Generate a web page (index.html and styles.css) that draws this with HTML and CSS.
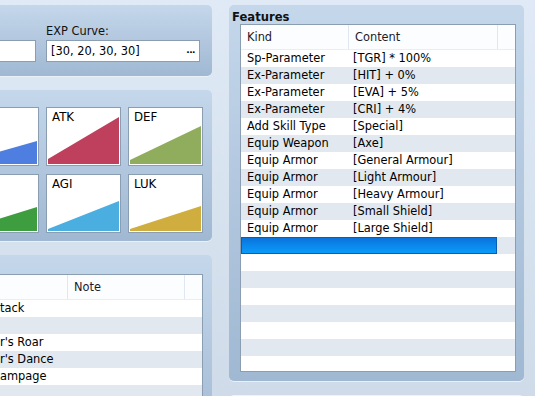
FILE: index.html
```html
<!DOCTYPE html>
<html lang="en">
<head>
  <meta charset="UTF-8">
  <title>Database - Classes</title>
  <link rel="stylesheet" href="styles.css">
</head>
<body>
  <div class="editor">
    <!-- left column: general settings, parameter curves, learnings -->
    <div class="col col__left">
      <section class="panel general__sec">
        <div class="field field__wide">
          <span class="field__label">&nbsp;</span>
          <div class="text__box"></div>
        </div>
        <div class="field">
          <span class="field__label">EXP Curve:</span>
          <div class="text__box">
            <span>[30, 20, 30, 30]</span>
            <span class="dots">...</span>
          </div>
        </div>
      </section>

      <section class="panel params__sec">
        <div class="param__grid">
          <div class="param">
            <svg viewBox="0 0 71 55" preserveAspectRatio="none"><polygon points="0,55 0,50 71,6 71,55" fill="#e08a30"/></svg>
          </div>
          <div class="param">
            <svg viewBox="0 0 71 55" preserveAspectRatio="none"><polygon points="0,55 0,52 71,32 71,55" fill="#4e7ee0"/></svg>
          </div>
          <div class="param">
            <span class="param__name">ATK</span>
            <svg viewBox="0 0 71 55" preserveAspectRatio="none"><polygon points="0,55 0,50 71,8 71,55" fill="#bf405d"/></svg>
          </div>
          <div class="param">
            <span class="param__name">DEF</span>
            <svg viewBox="0 0 71 55" preserveAspectRatio="none"><polygon points="0,55 0,51 71,17 71,55" fill="#8fad5d"/></svg>
          </div>
          <div class="param">
            <svg viewBox="0 0 71 55" preserveAspectRatio="none"><polygon points="0,55 0,53 71,34 71,55" fill="#a050c0"/></svg>
          </div>
          <div class="param">
            <svg viewBox="0 0 71 55" preserveAspectRatio="none"><polygon points="0,55 0,53 71,31 71,55" fill="#3d9d3f"/></svg>
          </div>
          <div class="param">
            <span class="param__name">AGI</span>
            <svg viewBox="0 0 71 55" preserveAspectRatio="none"><polygon points="0,55 0,53 71,25 71,55" fill="#4aaee0"/></svg>
          </div>
          <div class="param">
            <span class="param__name">LUK</span>
            <svg viewBox="0 0 71 55" preserveAspectRatio="none"><polygon points="0,55 0,53 71,30 71,55" fill="#cfad3f"/></svg>
          </div>
        </div>
      </section>

      <section class="panel learn__sec">
        <div class="list learn__list">
          <div class="list__head">
            <span></span>
            <span></span>
            <span>Note</span>
            <span></span>
          </div>
          <div class="list__body">
            <div class="list__row"><span></span><span>tack</span><span></span><span></span></div>
            <div class="list__row"><span></span><span></span><span></span><span></span></div>
            <div class="list__row"><span></span><span>r's Roar</span><span></span><span></span></div>
            <div class="list__row"><span></span><span>r's Dance</span><span></span><span></span></div>
            <div class="list__row"><span></span><span>ampage</span><span></span><span></span></div>
            <div class="list__row"><span></span><span></span><span></span><span></span></div>
          </div>
        </div>
      </section>
    </div>

    <!-- right column: features -->
    <div class="col col__right">
      <section class="panel features__sec">
        <h2 class="panel__title">Features</h2>
        <div class="list features__list">
          <div class="list__head">
            <span>Kind</span>
            <span>Content</span>
            <span></span>
          </div>
          <div class="list__body">
            <div class="list__row"><span>Sp-Parameter</span><span>[TGR] * 100%</span><span></span></div>
            <div class="list__row"><span>Ex-Parameter</span><span>[HIT] + 0%</span><span></span></div>
            <div class="list__row"><span>Ex-Parameter</span><span>[EVA] + 5%</span><span></span></div>
            <div class="list__row"><span>Ex-Parameter</span><span>[CRI] + 4%</span><span></span></div>
            <div class="list__row"><span>Add Skill Type</span><span>[Special]</span><span></span></div>
            <div class="list__row"><span>Equip Weapon</span><span>[Axe]</span><span></span></div>
            <div class="list__row"><span>Equip Armor</span><span>[General Armour]</span><span></span></div>
            <div class="list__row"><span>Equip Armor</span><span>[Light Armour]</span><span></span></div>
            <div class="list__row"><span>Equip Armor</span><span>[Heavy Armour]</span><span></span></div>
            <div class="list__row"><span>Equip Armor</span><span>[Small Shield]</span><span></span></div>
            <div class="list__row"><span>Equip Armor</span><span>[Large Shield]</span><span></span></div>
            <div class="list__row is__selected"><span class="select__bar"></span><span></span></div>
            <div class="list__row"><span></span><span></span><span></span></div>
            <div class="list__row"><span></span><span></span><span></span></div>
            <div class="list__row"><span></span><span></span><span></span></div>
            <div class="list__row"><span></span><span></span><span></span></div>
            <div class="list__row"><span></span><span></span><span></span></div>
            <div class="list__row"><span></span><span></span><span></span></div>
            <div class="list__row"><span></span><span></span><span></span></div>
          </div>
        </div>
      </section>
      <section class="panel note__sec"></section>
    </div>
  </div>
</body>
</html>
```

FILE: styles.css
```css
:root {
  --panel-top: #c4d7eb;
  --panel-bottom: #a0b8d2;
  --frame: #8b9db1;
  --stripe: #e2e8ef;
  --head-line: #dfe7f1;
}

* {
  margin: 0;
  padding: 0;
  box-sizing: border-box;
}

body {
  width: 535px;
  height: 396px;
  overflow: hidden;
  font-family: "DejaVu Sans", Verdana, sans-serif;
  font-size: 11.4px;
  color: #000;
  background: linear-gradient(#dfeaf6, #cfdbe8);
}

.editor {
  display: flex;
  gap: 17px;
  padding-top: 5px;
}

.col {
  display: flex;
  flex-direction: column;
  gap: 14px;
  flex: none;
}

.col__left {
  width: 400px;
  margin-left: -188px;
}

.col__right {
  width: 295px;
}

.panel {
  border-radius: 5px;
  background: linear-gradient(var(--panel-top), var(--panel-bottom));
  box-shadow: 0 1px 0 #e9f0f7;
}

/* general */
.general__sec {
  height: 71px;
  display: flex;
  justify-content: flex-end;
  gap: 10px;
  padding: 20px 12px 0 0;
}

.field {
  display: flex;
  flex-direction: column;
  gap: 2px;
  width: 154px;
}

.field__wide {
  width: 200px;
}

.field__label {
  line-height: 13px;
  color: #111;
}

.text__box {
  height: 22px;
  display: flex;
  justify-content: space-between;
  align-items: center;
  padding: 0 4px 0 4px;
  background: #fff;
  border: 1px solid var(--frame);
}

.dots {
  font-weight: bold;
  font-size: 9px;
  letter-spacing: -0.5px;
  padding-bottom: 3px;
}

/* parameter curves */
.params__sec {
  height: 151px;
  display: flex;
  justify-content: flex-end;
  padding: 17px 9px 0 0;
}

.param__grid {
  display: grid;
  grid-template-columns: repeat(4, 75px);
  grid-auto-rows: 59px;
  column-gap: 7px;
  row-gap: 8px;
}

.param {
  position: relative;
  background: #fff;
  border: 1px solid var(--frame);
  padding: 1px;
}

.param svg {
  display: block;
  width: 100%;
  height: 100%;
}

.param__name {
  position: absolute;
  left: 5px;
  top: 3px;
  line-height: 13px;
  font-size: 11.8px;
}

/* lists */
.list {
  background: #fff;
  border: 1px solid var(--frame);
  overflow: hidden;
}

.list__head,
.list__row {
  display: grid;
}

.list__head {
  height: 25px;
  align-items: center;
  background: #fcfdfe;
  border-bottom: 1px solid #e8eef5;
}

.list__head span {
  height: 100%;
  display: flex;
  align-items: center;
  padding-left: 6px;
  color: #1b1b2b;
}

.list__head span + span {
  border-left: 1px solid var(--head-line);
}

.list__row {
  height: 17px;
  line-height: 17px;
  white-space: nowrap;
}

.list__row:nth-child(even) {
  background: var(--stripe);
}

.list__row span {
  overflow: hidden;
}

/* learnings */
.learn__sec {
  height: 200px;
  padding: 19px 9px 0 0;
  display: flex;
  justify-content: flex-end;
}

.learn__list {
  width: 380px;
}

.learn__list .list__head,
.learn__list .list__row {
  grid-template-columns: 176px 67px 117px 1fr;
}

.learn__list .list__head span:nth-child(2) {
  border-left: none;
}

.learn__list .list__row span:nth-child(2) {
  padding-left: 0;
}

/* features */
.features__sec {
  height: 376px;
  padding: 6px 8px 9px 3px;
}

.panel__title {
  font-size: 11.6px;
  font-weight: bold;
  line-height: 13px;
  color: #111;
}

.features__list {
  margin-left: 8px;
  height: 348px;
}

.features__list .list__head,
.features__list .list__row {
  grid-template-columns: 107px 149px 1fr;
}

.features__list .list__row span:first-child {
  padding-left: 6px;
}

.features__list .list__row span:nth-child(2) {
  padding-left: 5px;
}

.features__list .list__row.is__selected {
  grid-template-columns: 256px 1fr;
}

.select__bar {
  display: block;
  height: 17px;
  border: 1px solid #0a5cb4;
  background: linear-gradient(#0a72da, #0a8aee 55%, #0b9af8);
}

.note__sec {
  height: 40px;
  border-top: 1px solid #eef3f8;
}
```
